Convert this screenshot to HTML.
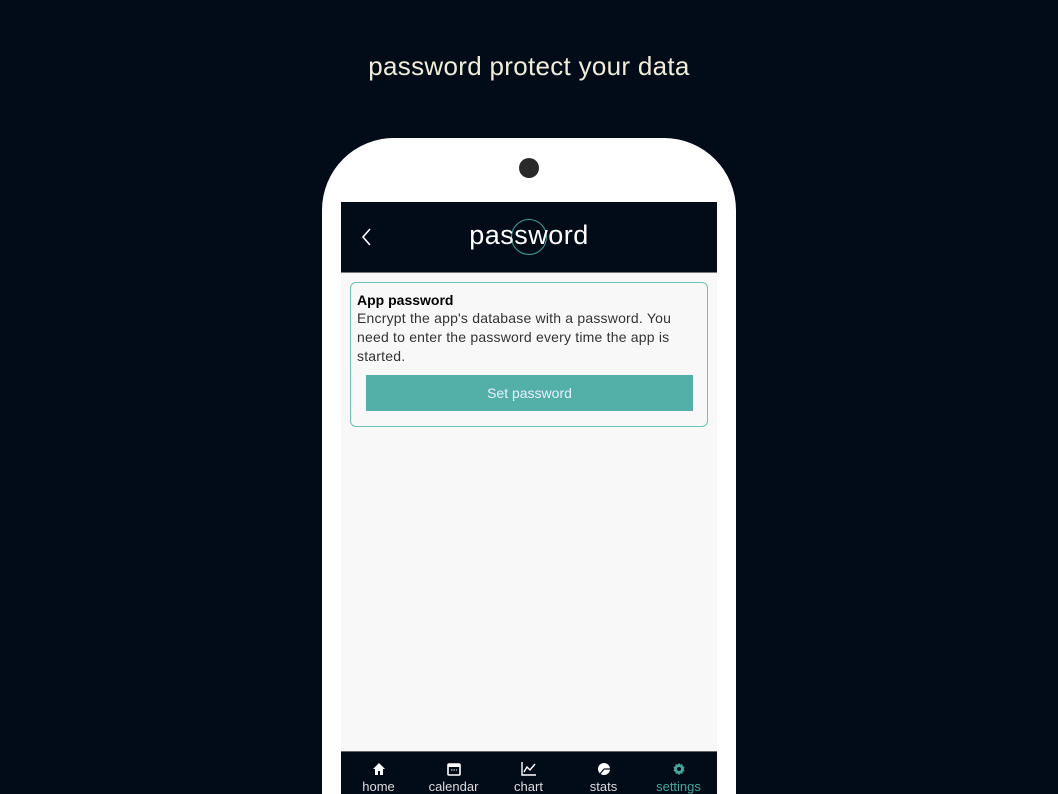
<!DOCTYPE html>
<html><head><style>
html,body{margin:0;width:1058px;height:794px;overflow:hidden}
body{background:#020b18;position:relative;font-family:"Liberation Sans",sans-serif}
.title{position:absolute;top:51px;left:0;width:1058px;text-align:center;color:#f0ecd8;font-size:26px;letter-spacing:0.3px}
.phone{position:absolute;left:322px;top:138px;width:414px;height:656px;background:#fff;border-radius:72px 72px 0 0}
.cam{position:absolute;left:519px;top:158px;width:20px;height:20px;border-radius:50%;background:#2a2a2a}
.screen{position:absolute;left:341px;top:202px;width:376px;height:592px;background:#f8f8f8;overflow:hidden}
.hdr{position:absolute;left:0;top:0;width:376px;height:70px;background:#020b18;border-bottom:1px solid #777}
.logo{position:absolute;left:0;width:376px;top:18px;text-align:center;color:#fff;font-size:27px;letter-spacing:0.5px}
.ring{position:absolute;left:170px;top:17px;width:34px;height:34px;border:1.5px solid #3aa59a;border-radius:50%}
.card{position:absolute;left:9px;top:80px;width:356px;height:143px;border:1px solid #6cc2b6;border-radius:6px;background:#f8f8f8}
.card h4{margin:0;position:absolute;left:6px;top:9px;font-size:14px;color:#000}
.card p{margin:0;position:absolute;left:6px;top:26px;width:345px;font-size:14px;line-height:19px;color:#333;letter-spacing:0.2px}
.btn{position:absolute;left:15px;top:92px;width:327px;height:36px;background:#52b0a8;color:#eef;font-size:14px;text-align:center;line-height:36px}
.nav{position:absolute;left:0;top:549px;width:376px;height:43px;background:#020b18;border-top:1px solid #666}
.it{position:absolute;top:0;width:75px;text-align:center;color:#ddd;font-size:13px}
.it svg{display:block;margin:10px auto 3px}
</style></head><body>
<div class="title">password protect your data</div>
<div class="phone"></div>
<div class="cam"></div>
<div class="screen">
 <div class="hdr">
  <svg style="position:absolute;left:20px;top:26px" width="12" height="18"><path d="M9 1L2 9L9 17" stroke="#fff" stroke-width="1.6" fill="none"/></svg>
  <div class="ring"></div>
  <div class="logo">password</div>
 </div>
 <div class="card">
  <h4>App password</h4>
  <p>Encrypt the app's database with a password. You need to enter the password every time the app is started.</p>
  <div class="btn">Set password</div>
 </div>
 <div class="nav">
  <div class="it" style="left:0"><svg width="14" height="14"><path d="M7 1L1 7H3V13H6V9H8V13H11V7H13Z" fill="#fff"/></svg>home</div>
  <div class="it" style="left:75px"><svg width="14" height="14"><rect x="1" y="2" width="12" height="11" rx="1" fill="none" stroke="#fff" stroke-width="1.6"/><rect x="1" y="2" width="12" height="3" fill="#fff"/><path d="M4 8h6" stroke="#fff" stroke-dasharray="1.5 1"/></svg>calendar</div>
  <div class="it" style="left:150px"><svg width="16" height="14"><path d="M1 0V13H15M3 10L6 5L9 8L14 2" stroke="#fff" stroke-width="1.4" fill="none"/></svg>chart</div>
  <div class="it" style="left:225px"><svg width="14" height="14"><circle cx="7" cy="7" r="6" fill="#fff"/><path d="M7 7L13 7M7 7L3 12" stroke="#020b18" stroke-width="1.2"/></svg>stats</div>
  <div class="it" style="left:300px;color:#45a89e"><svg width="16" height="14" viewBox="0 0 16 16"><path d="M8 1l1.5 2 2.3-.6.4 2.4 2.2 1-1 2.2 1 2.2-2.2 1-.4 2.4-2.3-.6L8 15l-1.5-2-2.3.6-.4-2.4-2.2-1 1-2.2-1-2.2 2.2-1 .4-2.4 2.3.6z" fill="#45a89e"/><circle cx="8" cy="8" r="2.3" fill="#020b18"/></svg>settings</div>
 </div>
</div>
</body></html>
